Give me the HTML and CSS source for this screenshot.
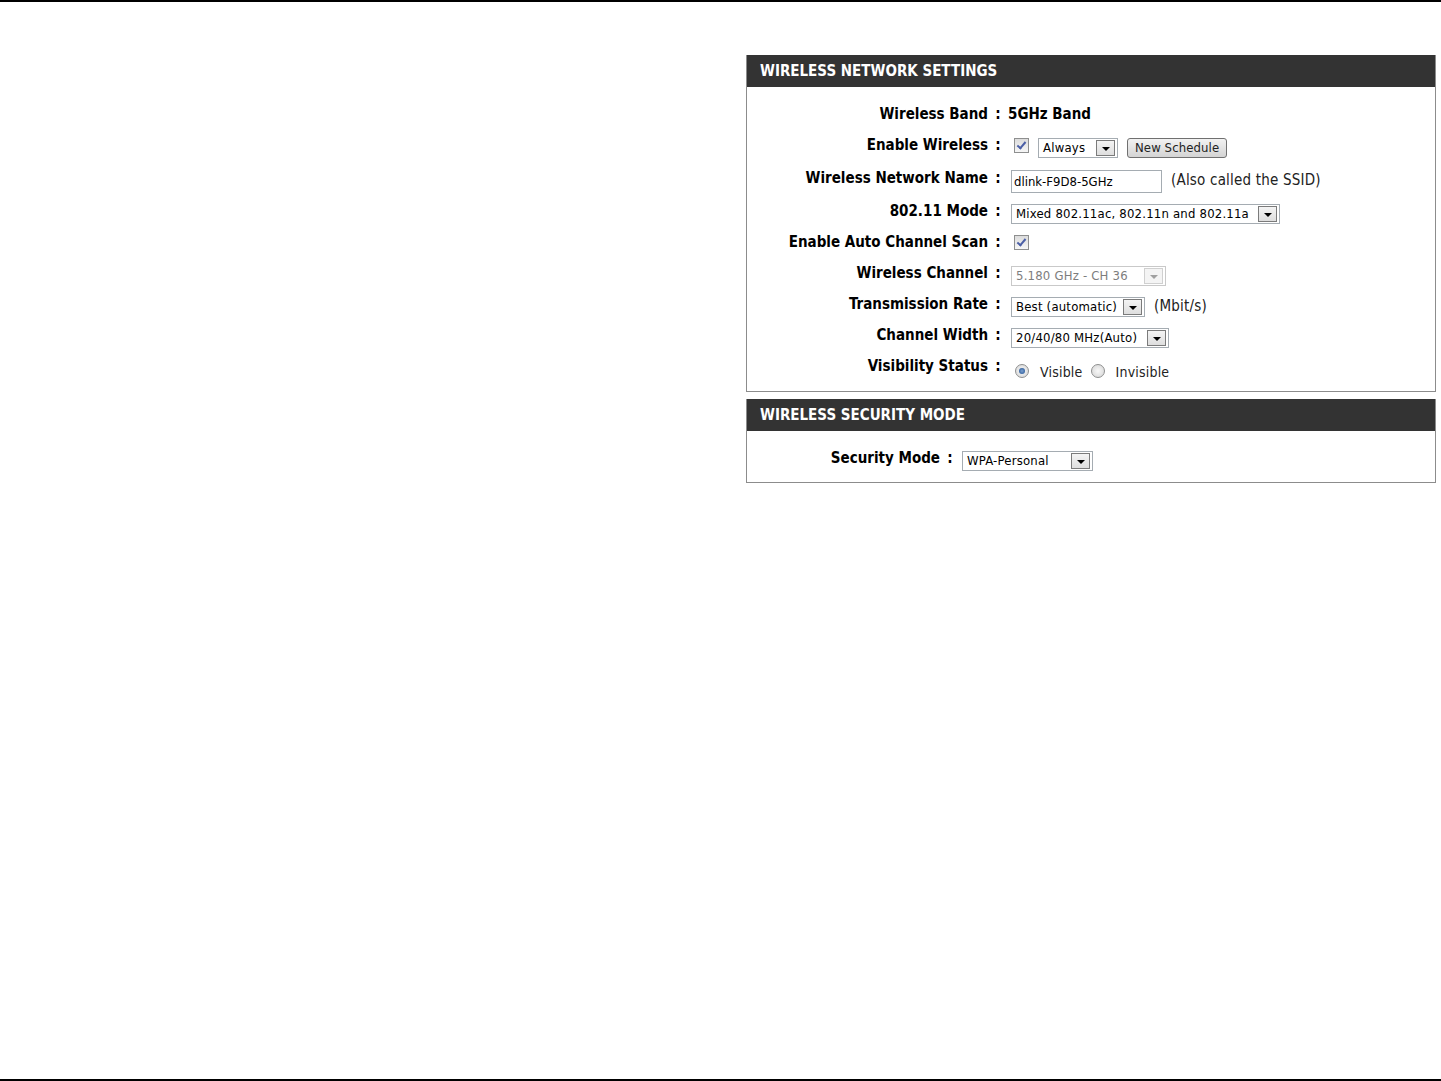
FILE: index.html
```html
<!DOCTYPE html>
<html lang="en">
<head>
    <meta charset="UTF-8">
    <title>Wireless Settings</title>
    <link rel="stylesheet" href="styles.css">
</head>
<body>
<div class="page">
    <div class="panels">
        <div class="panel">
            <div class="panel-head">WIRELESS NETWORK SETTINGS</div>
            <div class="panel-body">
                <div class="form-row">
                    <div class="label">Wireless Band</div>
                    <div class="colon">:</div>
                    <div class="value strong">5GHz Band</div>
                </div>
                <div class="form-row">
                    <div class="label">Enable Wireless</div>
                    <div class="colon">:</div>
                    <div class="value field">
                        <span class="check checked"></span>
                        <span class="select w-always"><span class="sel-text">Always</span><span class="arrow"></span></span>
                        <span class="button">New Schedule</span>
                    </div>
                </div>
                <div class="form-row tall">
                    <div class="label">Wireless Network Name</div>
                    <div class="colon">:</div>
                    <div class="value field">
                        <span class="textbox">dlink-F9D8-5GHz</span>
                        <span class="note">(Also called the SSID)</span>
                    </div>
                </div>
                <div class="form-row">
                    <div class="label">802.11 Mode</div>
                    <div class="colon">:</div>
                    <div class="value field">
                        <span class="select w-mode"><span class="sel-text">Mixed 802.11ac, 802.11n and 802.11a</span><span class="arrow"></span></span>
                    </div>
                </div>
                <div class="form-row">
                    <div class="label">Enable Auto Channel Scan</div>
                    <div class="colon">:</div>
                    <div class="value field">
                        <span class="check checked"></span>
                    </div>
                </div>
                <div class="form-row">
                    <div class="label">Wireless Channel</div>
                    <div class="colon">:</div>
                    <div class="value field">
                        <span class="select disabled w-channel"><span class="sel-text">5.180 GHz - CH 36</span><span class="arrow"></span></span>
                    </div>
                </div>
                <div class="form-row">
                    <div class="label">Transmission Rate</div>
                    <div class="colon">:</div>
                    <div class="value field">
                        <span class="select w-rate"><span class="sel-text">Best (automatic)</span><span class="arrow"></span></span>
                        <span class="note">(Mbit/s)</span>
                    </div>
                </div>
                <div class="form-row">
                    <div class="label">Channel Width</div>
                    <div class="colon">:</div>
                    <div class="value field">
                        <span class="select w-width"><span class="sel-text">20/40/80 MHz(Auto)</span><span class="arrow"></span></span>
                    </div>
                </div>
                <div class="form-row">
                    <div class="label">Visibility Status</div>
                    <div class="colon">:</div>
                    <div class="value field radios">
                        <span class="radio checked"></span><span class="radio-text">Visible</span>
                        <span class="radio"></span><span class="radio-text">Invisible</span>
                    </div>
                </div>
            </div>
        </div>

        <div class="panel">
            <div class="panel-head">WIRELESS SECURITY MODE</div>
            <div class="panel-body short">
                <div class="form-row security">
                    <div class="label">Security Mode</div>
                    <div class="colon">:</div>
                    <div class="value field">
                        <span class="select w-security"><span class="sel-text">WPA-Personal</span><span class="arrow"></span></span>
                    </div>
                </div>
            </div>
        </div>
    </div>
</div>
</body>
</html>
```

FILE: styles.css
```css
body {
    margin: 0;
    font-family: 'DejaVu Sans Condensed', 'DejaVu Sans', sans-serif;
    color: #000;
    background: #fff;
}
.page {
    height: 1081px;
    box-sizing: border-box;
    border-top: 2px solid #000;
    border-bottom: 2px solid #000;
    padding-top: 53px;
}
.panels {
    margin-left: 746px;
    width: 690px;
}
.panel {
    border: 1px solid #8c8c8c;
    border-top: none;
    margin-bottom: 7px;
}
.panel-head {
    background: #333;
    color: #fff;
    font-weight: bold;
    font-size: 15px;
    height: 32px;
    line-height: 33px;
    padding-left: 13px;
}
.panel-body {
    padding: 11px 0 10px;
}
.panel-body.short {
    padding: 11px 0 9px;
}
.form-row {
    display: grid;
    grid-template-columns: 241px 20px auto;
    align-items: center;
    height: 31px;
}
.form-row.tall {
    height: 35px;
}
.form-row.security {
    grid-template-columns: 193px 20px auto;
}
.label {
    text-align: right;
    font-weight: bold;
    font-size: 15px;
}
.colon {
    text-align: center;
    font-weight: bold;
    font-size: 15px;
}
.value {
    display: flex;
    align-items: center;
    font-size: 15px;
}
.value.strong {
    font-weight: bold;
}
.field {
    margin-top: 6px;
    padding-left: 3px;
}
.security .field {
    padding-left: 2px;
}
.note {
    font-size: 15px;
    letter-spacing: 0.2px;
    color: #222;
    margin-left: 9px;
    margin-top: -1px;
}
.check {
    width: 13px;
    height: 13px;
    border: 1px solid #8e8f8f;
    background: linear-gradient(#dcdcdc, #f6f6f6);
    margin-left: 3px;
    margin-top: -5px;
    display: inline-block;
    position: relative;
}
.check.checked::after {
    content: '';
    position: absolute;
    left: 4px;
    top: 1px;
    width: 3px;
    height: 7px;
    border: solid #4b5fa6;
    border-width: 0 2px 2px 0;
    transform: rotate(40deg);
}
.select {
    display: inline-flex;
    align-items: center;
    justify-content: space-between;
    height: 18px;
    border: 1px solid #a5acb2;
    background: #fff;
    font-size: 13px;
    letter-spacing: 0.2px;
}
.sel-text {
    padding-left: 4px;
    white-space: nowrap;
}
.arrow {
    width: 17px;
    height: 14px;
    margin-right: 2px;
    border: 1px solid #7b7b7b;
    background: linear-gradient(#f4f4f4, #dedede);
    position: relative;
    flex-shrink: 0;
}
.arrow::after {
    content: '';
    position: absolute;
    left: 5px;
    top: 6px;
    border-left: 4px solid transparent;
    border-right: 4px solid transparent;
    border-top: 4px solid #000;
}
.select.disabled {
    border-color: #c9c9c9;
    color: #7d7d7d;
}
.select.disabled .arrow {
    border-color: #d0d0d0;
    background: #f4f4f4;
}
.select.disabled .arrow::after {
    border-top-color: #a0a0a0;
}
.w-always {
    width: 78px;
    margin-left: 9px;
}
.w-mode {
    width: 267px;
}
.w-channel {
    width: 153px;
}
.w-rate {
    width: 132px;
}
.w-width {
    width: 156px;
}
.w-security {
    width: 129px;
}
.button {
    display: inline-block;
    height: 18px;
    line-height: 18px;
    padding: 0 7px;
    margin-left: 9px;
    border: 1px solid #707070;
    border-radius: 3px;
    background: linear-gradient(#f2f2f2, #d4d4d4);
    font-size: 13px;
    letter-spacing: 0.1px;
    color: #222;
}
.textbox {
    display: inline-block;
    width: 147px;
    height: 21px;
    line-height: 21px;
    padding-left: 2px;
    border: 1px solid #a5acb2;
    font-size: 13px;
    margin-top: 1px;
}
.radios {
    margin-top: 12px;
}
.radio {
    width: 12px;
    height: 12px;
    border: 1px solid #8e8f8f;
    border-radius: 50%;
    background: radial-gradient(#f8f8f8, #d4d4d4);
    margin-left: 4px;
    margin-top: -2px;
    position: relative;
}
.radio.checked::after {
    content: '';
    position: absolute;
    left: 3px;
    top: 3px;
    width: 6px;
    height: 6px;
    border-radius: 50%;
    background: radial-gradient(#7aa0d0, #1d4d8e);
}
.radio-text {
    font-size: 14px;
    letter-spacing: 0.2px;
    color: #222;
    margin-left: 11px;
    margin-right: 4px;
}
```
